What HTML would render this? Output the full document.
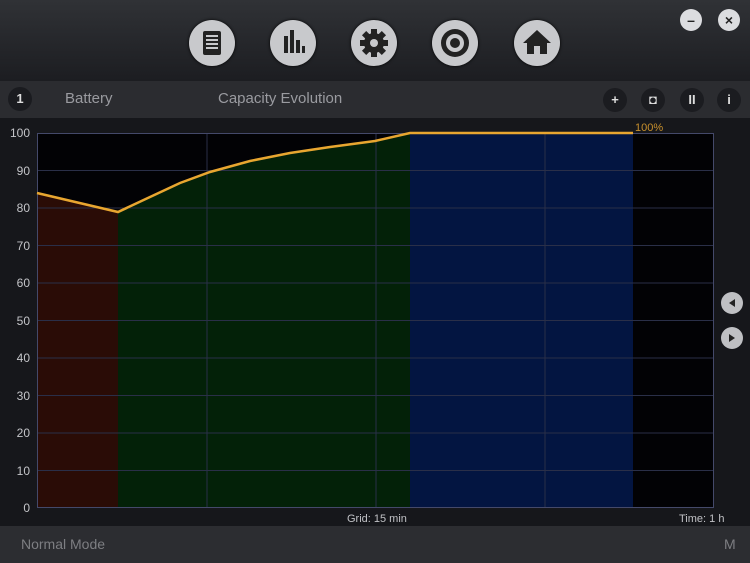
<!DOCTYPE html>
<html><head><style>
body{margin:0;width:750px;height:563px;overflow:hidden;background:#16171b;font-family:"Liberation Sans",sans-serif;position:relative}
.top{position:absolute;left:0;top:0;width:750px;height:81px;background:linear-gradient(#303236,#1c1d21)}
.ic{position:absolute;top:20px;width:46px;height:46px;border-radius:50%;background:#c8c9cc;box-shadow:0 0 3px #000}
.ic svg{position:absolute;left:0;top:0}
.wb{position:absolute;top:9px;width:22px;height:22px;border-radius:50%;background:#dcdde0;color:#222;font-weight:bold;text-align:center;line-height:22px;font-size:14px}
.tab{position:absolute;left:0;top:81px;width:750px;height:37px;background:#2b2c30;color:#9a9ba0;font-size:15px}
.cb{position:absolute;top:88px;width:24px;height:24px;border-radius:50%;background:#1b1c20;color:#ddd;font-size:13px;font-weight:bold;text-align:center;line-height:24px}
.yl{position:absolute;left:0;width:30px;text-align:right;color:#c4c5c9;font-size:12px}
.status{position:absolute;left:0;top:526px;width:750px;height:37px;background:#2c2d31;color:#7d7e82;font-size:14px}
.nav{position:absolute;left:721px;width:22px;height:22px;border-radius:50%;background:#bfc0c3}
</style></head><body>
<div class="top"></div>
<div class="ic" style="left:189px"><svg width="46" height="46"><rect x="14" y="11" width="18" height="24" rx="2" fill="#222"/><g stroke="#c8c9cc" stroke-width="2"><line x1="17" y1="16" x2="29" y2="16"/><line x1="17" y1="20" x2="29" y2="20"/><line x1="17" y1="24" x2="29" y2="24"/><line x1="17" y1="28" x2="29" y2="28"/></g></svg></div>
<div class="ic" style="left:270px"><svg width="46" height="46" fill="#222"><rect x="14" y="16" width="4" height="17"/><rect x="20" y="10" width="4" height="23"/><rect x="26" y="20" width="4" height="13"/><rect x="32" y="26" width="3" height="7"/></svg></div>
<div class="ic" style="left:351px"><svg width="46" height="46"><g transform="translate(23,23)" fill="#222"><circle r="10"/><g><rect x="-3" y="-14" width="6" height="28"/><rect x="-3" y="-14" width="6" height="28" transform="rotate(45)"/><rect x="-3" y="-14" width="6" height="28" transform="rotate(90)"/><rect x="-3" y="-14" width="6" height="28" transform="rotate(135)"/></g><circle r="4" fill="#c8c9cc"/></g></svg></div>
<div class="ic" style="left:432px"><svg width="46" height="46"><circle cx="23" cy="23" r="14" fill="#222"/><circle cx="23" cy="23" r="9" fill="#c8c9cc"/><circle cx="23" cy="23" r="5" fill="#222"/></svg></div>
<div class="ic" style="left:514px"><svg width="46" height="46" fill="#222"><path d="M23 10 L37 23 L33 23 L33 34 L13 34 L13 23 L9 23 Z"/><rect x="20" y="26" width="6" height="8" fill="#c8c9cc"/></svg></div>
<div class="wb" style="left:680px">–</div>
<div class="wb" style="left:718px">×</div>
<div class="tab"><span style="position:absolute;left:65px;top:9px">Battery</span><span style="position:absolute;left:218px;top:9px">Capacity Evolution</span></div>
<div class="cb" style="left:8px;top:87px;background:#1a1b1f">1</div>
<div class="cb" style="left:603px">+</div>
<div class="cb" style="left:641px">◘</div>
<div class="cb" style="left:680px">II</div>
<div class="cb" style="left:717px">i</div>
<svg style="position:absolute;left:0;top:118px" width="750" height="408">
<rect x="37" y="15" width="677" height="375" fill="#020205"/>
<polygon points="37,75 118,94 118,390 37,390" fill="#2a0c06"/>
<polygon points="118,94 150,79 180,65 210,54 250,43 290,35 330,29 375,23 410,15 410,390 118,390" fill="#032108"/>
<rect x="410" y="15" width="223" height="375" fill="#031541"/>
<g stroke="#2a2f48" stroke-width="1">
<line x1="37" y1="52.5" x2="714" y2="52.5"/><line x1="37" y1="90" x2="714" y2="90"/><line x1="37" y1="127.5" x2="714" y2="127.5"/><line x1="37" y1="165" x2="714" y2="165"/><line x1="37" y1="202.5" x2="714" y2="202.5"/><line x1="37" y1="240" x2="714" y2="240"/><line x1="37" y1="277.5" x2="714" y2="277.5"/><line x1="37" y1="315" x2="714" y2="315"/><line x1="37" y1="352.5" x2="714" y2="352.5"/>
<line x1="207" y1="15" x2="207" y2="390"/><line x1="376" y1="15" x2="376" y2="390"/><line x1="545" y1="15" x2="545" y2="390"/>
</g>
<rect x="37.5" y="15.5" width="676" height="374" fill="none" stroke="#44496a"/>
<polyline points="37,75 118,94 150,79 180,65 210,54 250,43 290,35 330,29 375,23 410,15 633,15" fill="none" stroke="#e8a630" stroke-width="2.5"/>
<text x="635" y="13" fill="#c8902c" font-size="11" font-family="Liberation Sans">100%</text>
<text x="347" y="404" fill="#c0c1c5" font-size="11" font-family="Liberation Sans">Grid: 15 min</text>
<text x="679" y="404" fill="#c0c1c5" font-size="11" font-family="Liberation Sans">Time: 1 h</text>
</svg>
<div class="yl" style="top:126px">100</div><div class="yl" style="top:164px">90</div><div class="yl" style="top:201px">80</div><div class="yl" style="top:239px">70</div><div class="yl" style="top:276px">60</div><div class="yl" style="top:314px">50</div><div class="yl" style="top:351px">40</div><div class="yl" style="top:389px">30</div><div class="yl" style="top:426px">20</div><div class="yl" style="top:464px">10</div><div class="yl" style="top:501px">0</div>
<div class="nav" style="top:292px"><svg width="22" height="22"><path d="M8 11 L14 7 L14 15 Z" fill="#222"/></svg></div>
<div class="nav" style="top:327px"><svg width="22" height="22"><path d="M14 11 L8 7 L8 15 Z" fill="#222"/></svg></div>
<div class="status"><span style="position:absolute;left:21px;top:10px">Normal Mode</span><span style="position:absolute;left:724px;top:10px">M</span></div>
</body></html>
